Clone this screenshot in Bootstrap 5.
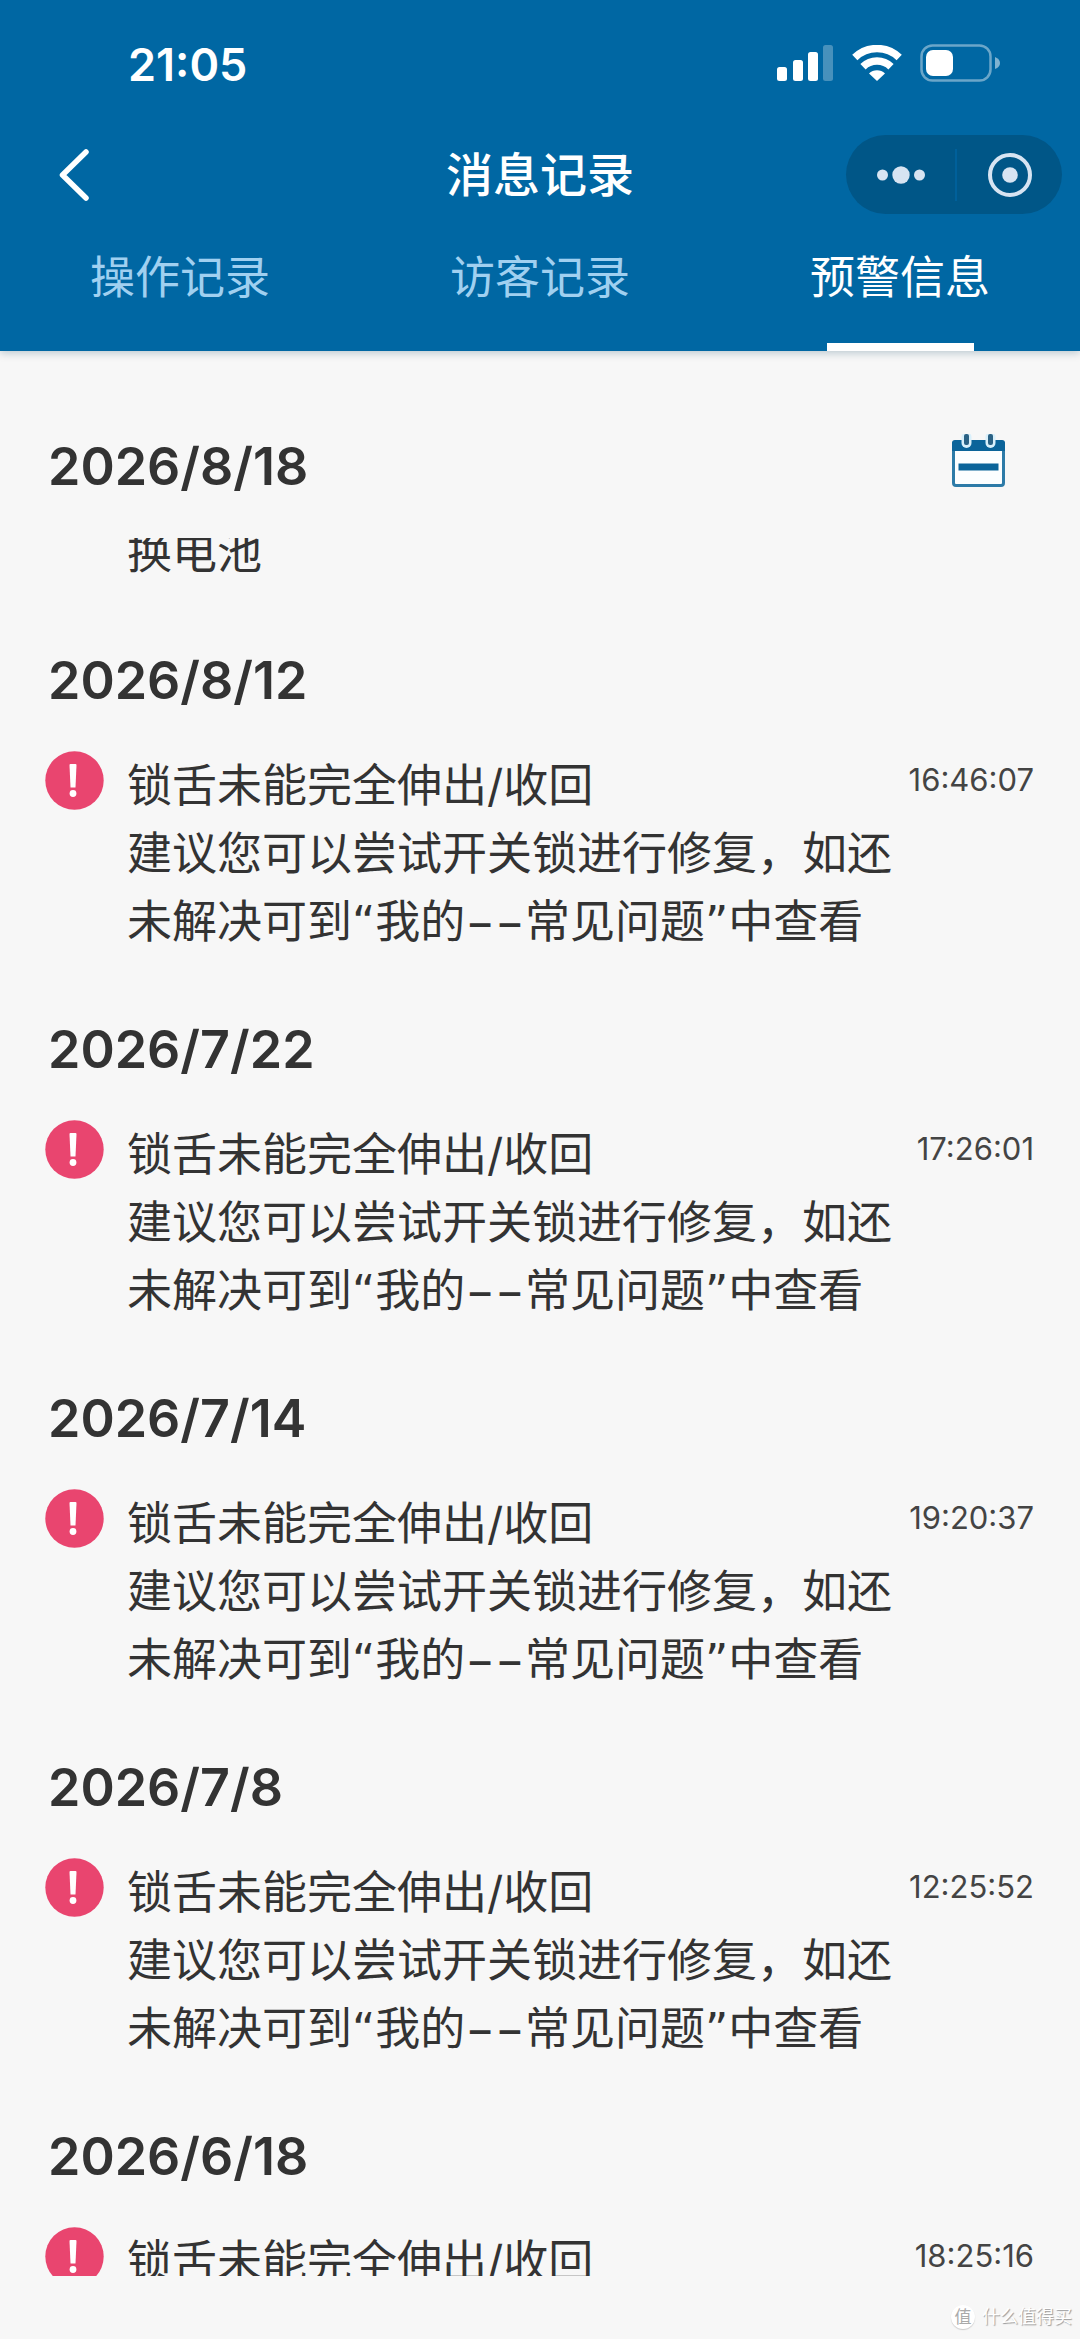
<!DOCTYPE html>
<html lang="zh-CN">
<head>
<meta charset="utf-8">
<meta name="viewport" content="width=device-width, initial-scale=1">
<title>消息记录</title>
<link href="https://cdn.jsdelivr.net/npm/bootstrap@5.3.0/dist/css/bootstrap.min.css" rel="stylesheet">
<style>
  :root { --brand: #0067a3; --ink: #333; }
  body { background: #f7f7f7; color: var(--ink); font-family: Inter, "Noto Sans CJK SC", sans-serif; font-size: 45px; line-height: 68px; }
  svg { display: block; }
  .app-head { background: var(--brand); box-shadow: 0 2px 8px rgba(0, 60, 90, .25); }
  .status-row { height: 135px; padding: 34px 80px 0 128px; }
  .status-row time { font-weight: 600; line-height: 62px; }
  .status-icons { height: 58px; gap: 18px; }
  .nav-row { height: 79px; }
  .side-start { padding-left: 54px; }
  .side-end { padding-right: 18px; }
  .page-title { font-size: 47px; font-weight: 500; line-height: 68px; }
  .capsule { background: #005687; width: 216px; height: 79px; }
  .capsule button + button { border-left: 2px solid #00609a !important; }
  .capsule button { height: 52px; }
  .tab-link { color: #a0d0f0; padding: 30px 0 31px; text-decoration: none; }
  .tab-link::after { content: ""; display: block; width: 147px; height: 8px; margin: 31px auto -31px; }
  .tab-link:hover { color: #fff; }
  .tab-link.active { color: #fff; }
  .tab-link.active::after { background: #fff; }
  .top-date { padding: 83px 75px 41px 48px; }
  .top-date .row-inner { height: 63px; }
  .day-title { font-size: 52px; font-weight: 600; line-height: 60px; margin: 0; }
  .log-list { min-height: 0; scrollbar-width: none; }
  .log-list::-webkit-scrollbar { display: none; }
  .scrolled { margin-top: -19px; padding-left: 127px; }
  .day-block .day-title { padding: 64px 48px 40px; }
  .log-item { padding: 0 46px 0 45px; }
  .log-icon { width: 82px; }
  .log-text { padding-top: 1px; }
  .log-time { font-size: 31px; line-height: 58px; min-width: 126px; color: #444; }
  .quote-mark { font-family: "DejaVu Sans", sans-serif; line-height: 1; }
  .page-foot { height: 63px; padding: 0 8px 10px; font-size: 18px; line-height: 24px; color: #fff; text-shadow: 1px 1px 1px #999; gap: 7px; }
  .foot-logo { width: 24px; height: 24px; background: #fff; color: #aaa; text-shadow: none; font-size: 17px; box-shadow: 0 1px 1px #ccc; }
</style>
<script src="https://cdn.jsdelivr.net/npm/bootstrap@5.3.0/dist/js/bootstrap.bundle.min.js"></script>
</head>
<body class="d-flex flex-column vh-100 overflow-hidden">
<header class="app-head text-white flex-shrink-0">
  <div class="status-row d-flex justify-content-between align-items-start">
    <time>21:05</time>
    <div class="status-icons d-flex align-items-center">
      <svg width="57" height="36" viewBox="0 0 57 36" fill="#fff" aria-label="信号">
        <rect x="0" y="22" width="10" height="14" rx="2.5"/><rect x="16" y="15" width="10" height="21" rx="2.5"/><rect x="31" y="7" width="10" height="29" rx="2.5"/><rect x="46" y="0" width="10" height="36" rx="2.5" opacity=".28"/>
      </svg>
      <svg width="50" height="36" viewBox="0 0 50 36" aria-label="无线网络">
        <path fill="none" stroke="#fff" stroke-width="7.500" d="M2.800 12.500a32 32 0 0 1 44.400 0M11 21.800a20 20 0 0 1 28 0"/>
        <path fill="#fff" d="M17 28.500a11.500 11.500 0 0 1 16 0L25 36z"/>
      </svg>
      <svg width="80" height="38" viewBox="0 0 80 38" aria-label="电池">
        <rect x="1.500" y="1.500" width="69" height="35" rx="11" fill="none" stroke="#fff" stroke-opacity=".42" stroke-width="2.500"/>
        <rect x="6" y="6" width="27" height="26" rx="7" fill="#fff"/>
        <path d="M75 13q5 2 5 6t-5 6z" fill="#fff" fill-opacity=".5"/>
      </svg>
    </div>
  </div>
  <div class="nav-row row g-0 align-items-center">
    <div class="side-start col-4 d-flex">
      <button type="button" class="btn p-0 border-0" aria-label="返回">
        <svg width="40" height="56" viewBox="0 0 40 56" fill="none" stroke="#fff" stroke-width="5.500" stroke-linecap="round" stroke-linejoin="round"><path d="M32 5 8.500 28 32 51"/></svg>
      </button>
    </div>
    <h1 class="page-title col-4 m-0 text-center">消息记录</h1>
    <div class="side-end col-4 d-flex justify-content-end">
      <div class="capsule d-flex align-items-center rounded-pill">
        <button type="button" class="btn p-0 border-0 rounded-0 flex-fill d-flex justify-content-center align-items-center" aria-label="更多">
          <svg width="50" height="20" viewBox="0 0 50 20" fill="#d7e4f2"><circle cx="6.500" cy="10" r="5.500"/><circle cx="25" cy="10" r="8.700"/><circle cx="43.500" cy="10" r="5.500"/></svg>
        </button>
        <button type="button" class="btn p-0 border-0 rounded-0 flex-fill d-flex justify-content-center align-items-center" aria-label="关闭">
          <svg width="46" height="46" viewBox="0 0 46 46"><circle cx="23" cy="23" r="20" fill="none" stroke="#d7e4f2" stroke-width="4"/><circle cx="23" cy="23" r="7.800" fill="#d7e4f2"/></svg>
        </button>
      </div>
    </div>
  </div>
  <nav class="row g-0 text-center">
    <a class="tab-link col" href="#ops">操作记录</a>
    <a class="tab-link col" href="#guests">访客记录</a>
    <a class="tab-link col active" href="#alerts" aria-current="page">预警信息</a>
  </nav>
</header>

<div class="top-date flex-shrink-0">
  <div class="row-inner d-flex justify-content-between">
    <h2 class="day-title align-self-end">2026/8/18</h2>
    <button type="button" class="btn p-0 border-0 align-self-start" aria-label="选择日期">
      <svg width="53" height="53" viewBox="0 0 53 53">
        <rect x="1.500" y="8" width="50" height="43.500" rx="2.500" fill="#fcfeff" stroke="#2d7ba8" stroke-width="3"/>
        <path d="M0 17V9q0-3 3-3h47q3 0 3 3v8z" fill="#0b649a"/>
        <rect x="9.500" y="-2" width="10" height="16" rx="5" fill="#d9f0fb"/><rect x="33.500" y="-2" width="10" height="16" rx="5" fill="#d9f0fb"/>
        <rect x="12" y="0" width="5" height="11" rx="2" fill="#2b6285"/><rect x="36" y="0" width="5" height="11" rx="2" fill="#2b6285"/>
        <rect x="6.500" y="29.500" width="40" height="7" fill="#0b649a"/>
      </svg>
    </button>
  </div>
</div>

<main class="log-list flex-grow-1 overflow-auto" id="alerts">
  <p class="scrolled mb-0">换电池</p>

  <section class="day-block">
    <h2 class="day-title">2026/8/12</h2>
    <div class="log-item d-flex align-items-start">
      <div class="log-icon flex-shrink-0"><svg width="59" height="59" viewBox="0 0 59 59"><circle cx="29.500" cy="29.500" r="29.200" fill="#e9456f"/><path d="M24.500 14q0-1 1-1h5q1 0 1 1l-1 22.500h-5z" fill="#fff"/><circle cx="28" cy="42.500" r="3.400" fill="#fff"/></svg></div>
      <div class="log-text flex-fill"><p class="m-0">锁舌未能完全伸出/收回</p><p class="m-0">建议您可以尝试开关锁进行修复，如还<br>未解决可到<span class="quote-mark">“</span>我的−−常见问题<span class="quote-mark">”</span>中查看</p></div>
      <time class="log-time text-end flex-shrink-0">16:46:07</time>
    </div>
  </section>

  <section class="day-block">
    <h2 class="day-title">2026/7/22</h2>
    <div class="log-item d-flex align-items-start">
      <div class="log-icon flex-shrink-0"><svg width="59" height="59" viewBox="0 0 59 59"><circle cx="29.500" cy="29.500" r="29.200" fill="#e9456f"/><path d="M24.500 14q0-1 1-1h5q1 0 1 1l-1 22.500h-5z" fill="#fff"/><circle cx="28" cy="42.500" r="3.400" fill="#fff"/></svg></div>
      <div class="log-text flex-fill"><p class="m-0">锁舌未能完全伸出/收回</p><p class="m-0">建议您可以尝试开关锁进行修复，如还<br>未解决可到<span class="quote-mark">“</span>我的−−常见问题<span class="quote-mark">”</span>中查看</p></div>
      <time class="log-time text-end flex-shrink-0">17:26:01</time>
    </div>
  </section>

  <section class="day-block">
    <h2 class="day-title">2026/7/14</h2>
    <div class="log-item d-flex align-items-start">
      <div class="log-icon flex-shrink-0"><svg width="59" height="59" viewBox="0 0 59 59"><circle cx="29.500" cy="29.500" r="29.200" fill="#e9456f"/><path d="M24.500 14q0-1 1-1h5q1 0 1 1l-1 22.500h-5z" fill="#fff"/><circle cx="28" cy="42.500" r="3.400" fill="#fff"/></svg></div>
      <div class="log-text flex-fill"><p class="m-0">锁舌未能完全伸出/收回</p><p class="m-0">建议您可以尝试开关锁进行修复，如还<br>未解决可到<span class="quote-mark">“</span>我的−−常见问题<span class="quote-mark">”</span>中查看</p></div>
      <time class="log-time text-end flex-shrink-0">19:20:37</time>
    </div>
  </section>

  <section class="day-block">
    <h2 class="day-title">2026/7/8</h2>
    <div class="log-item d-flex align-items-start">
      <div class="log-icon flex-shrink-0"><svg width="59" height="59" viewBox="0 0 59 59"><circle cx="29.500" cy="29.500" r="29.200" fill="#e9456f"/><path d="M24.500 14q0-1 1-1h5q1 0 1 1l-1 22.500h-5z" fill="#fff"/><circle cx="28" cy="42.500" r="3.400" fill="#fff"/></svg></div>
      <div class="log-text flex-fill"><p class="m-0">锁舌未能完全伸出/收回</p><p class="m-0">建议您可以尝试开关锁进行修复，如还<br>未解决可到<span class="quote-mark">“</span>我的−−常见问题<span class="quote-mark">”</span>中查看</p></div>
      <time class="log-time text-end flex-shrink-0">12:25:52</time>
    </div>
  </section>

  <section class="day-block">
    <h2 class="day-title">2026/6/18</h2>
    <div class="log-item d-flex align-items-start">
      <div class="log-icon flex-shrink-0"><svg width="59" height="59" viewBox="0 0 59 59"><circle cx="29.500" cy="29.500" r="29.200" fill="#e9456f"/><path d="M24.500 14q0-1 1-1h5q1 0 1 1l-1 22.500h-5z" fill="#fff"/><circle cx="28" cy="42.500" r="3.400" fill="#fff"/></svg></div>
      <div class="log-text flex-fill"><p class="m-0">锁舌未能完全伸出/收回</p></div>
      <time class="log-time text-end flex-shrink-0">18:25:16</time>
    </div>
  </section>
</main>

<footer class="page-foot d-flex justify-content-end align-items-end flex-shrink-0">
  <span class="foot-logo rounded-circle text-center">值</span><span>什么值得买</span>
</footer>
</body>
</html>
